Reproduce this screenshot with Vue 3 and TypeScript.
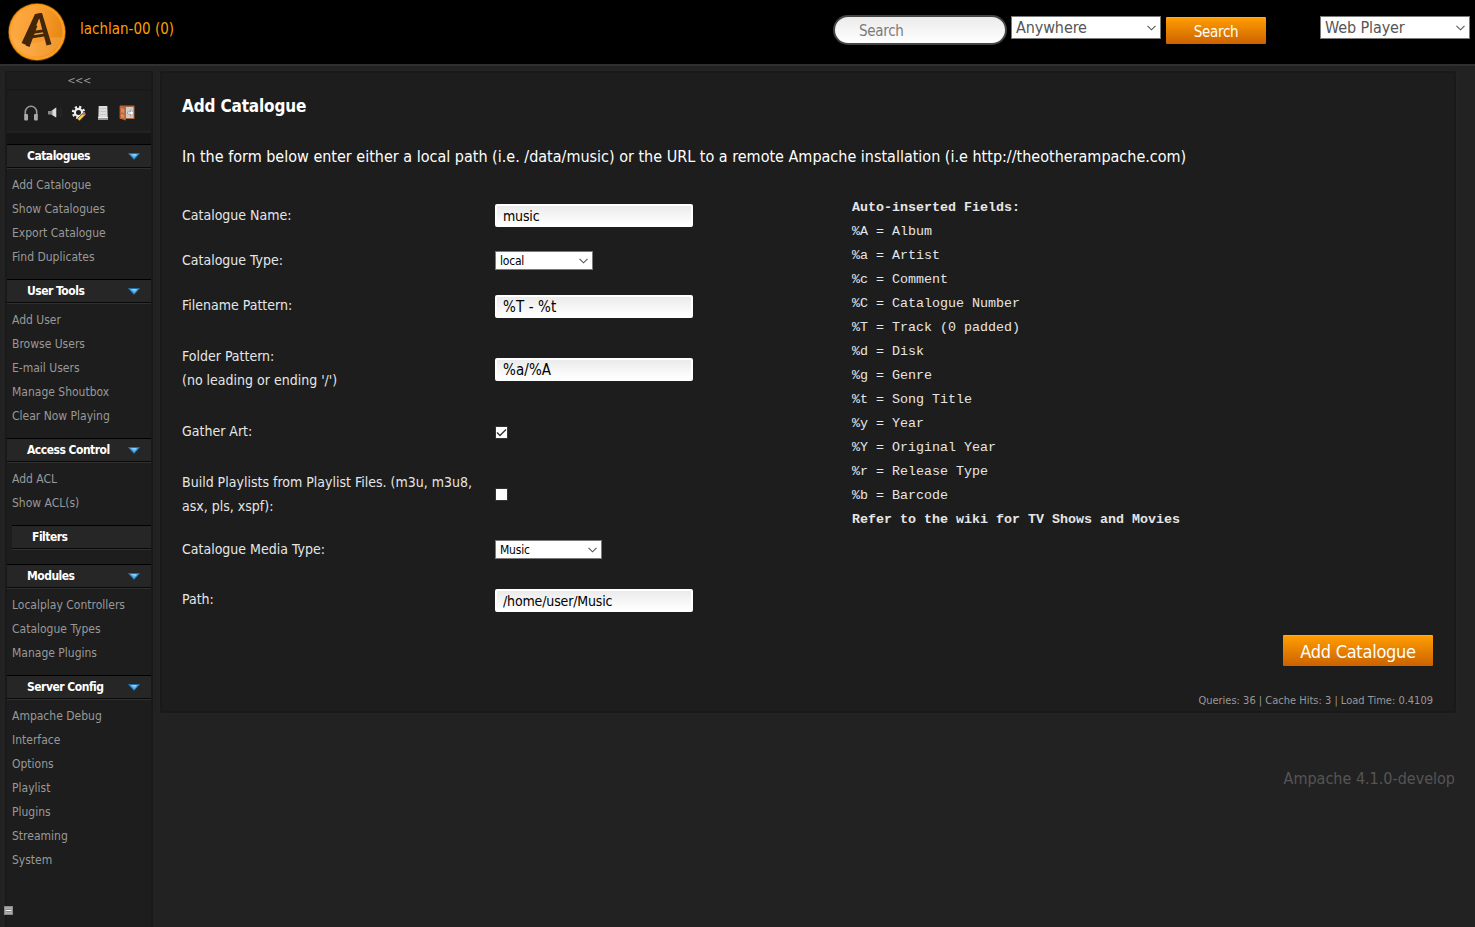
<script setup lang="ts">
import { ref } from 'vue'

interface Section { title: string; items: string[]; inset?: boolean }

const sections: Section[] = [
  { title: 'Catalogues', items: ['Add Catalogue', 'Show Catalogues', 'Export Catalogue', 'Find Duplicates'] },
  { title: 'User Tools', items: ['Add User', 'Browse Users', 'E-mail Users', 'Manage Shoutbox', 'Clear Now Playing'] },
  { title: 'Access Control', items: ['Add ACL', 'Show ACL(s)'] },
  { title: 'Filters', items: [], inset: true },
  { title: 'Modules', items: ['Localplay Controllers', 'Catalogue Types', 'Manage Plugins'] },
  { title: 'Server Config', items: ['Ampache Debug', 'Interface', 'Options', 'Playlist', 'Plugins', 'Streaming', 'System'] },
]

const fields: string[] = [
  '%A = Album', '%a = Artist', '%c = Comment', '%C = Catalogue Number', '%T = Track (0 padded)',
  '%d = Disk', '%g = Genre', '%t = Song Title', '%y = Year', '%Y = Original Year',
  '%r = Release Type', '%b = Barcode',
]

const name = ref('music')
const filePattern = ref('%T - %t')
const folderPattern = ref('%a/%A')
const path = ref('/home/user/Music')
const gatherArt = ref(true)
const buildPlaylists = ref(false)
</script>

<template>
  <div class="page">
    <header class="header">
      <svg class="logo" width="60" height="60" viewBox="0 0 60 60">
        <defs>
          <linearGradient id="disc" x1="0" y1="0" x2="1" y2="0.2">
            <stop offset="0" stop-color="#fdaa45" /><stop offset="0.5" stop-color="#f9a035" /><stop offset="1" stop-color="#ea8a16" />
          </linearGradient>
        </defs>
        <circle cx="30" cy="30" r="29" fill="#5c3a10" />
        <circle cx="30" cy="30" r="28.2" fill="#ff9a12" />
        <circle cx="30" cy="30" r="26.6" fill="#fda63a" />
        <circle cx="30" cy="30" r="25.8" fill="url(#disc)" />
        <path d="M4.4 33C15 42 24 44 35 39S50 36 55.2 35A26 26 0 0 1 4.4 33Z" fill="#ffbd68" opacity=".3" />
        <g fill="#42260a">
          <path d="M28 12L34.5 11L35.2 16L31.8 17L21.5 44L14.6 41Z" />
          <path d="M31 11.4L35 11L44.5 42.2L39.5 43.4Z" />
          <path d="M28 23L30.4 24L22.5 45L18.6 43.4Z" />
          <path d="M22 29.5L37.5 27.2L38 30L21 32.6Z" />
          <path d="M20 34.2L39.5 31.2L40 34L21 37Z" />
        </g>
      </svg>
      <a class="user">lachlan-00 (0)</a>
      <div class="search">
        <input class="query" type="text" placeholder="Search">
        <div class="select big">
          <select><option>Anywhere</option></select>
          <svg width="9" height="6" viewBox="0 0 9 6"><path d="M.5 .8L4.5 4.8L8.5 .8" /></svg>
        </div>
        <button class="orange find">Search</button>
      </div>
      <div class="select big player">
        <select><option>Web Player</option></select>
        <svg width="9" height="6" viewBox="0 0 9 6"><path d="M.5 .8L4.5 4.8L8.5 .8" /></svg>
      </div>
    </header>

    <div class="body">
      <aside class="sidebar">
        <div class="collapse">&lt;&lt;&lt;</div>
        <div class="tools">
          <svg width="16" height="16" viewBox="0 0 16 16">
            <path d="M2.3 11V7a5.7 5.7 0 0 1 11.4 0v4" fill="none" stroke="#999" stroke-width="1.6" />
            <rect x="1.2" y="9" width="3.8" height="6.5" rx="1" fill="#aaa" /><rect x="11" y="9" width="3.8" height="6.5" rx="1" fill="#aaa" />
          </svg>
          <svg width="16" height="16" viewBox="0 0 16 16">
            <path d="M1 6H4L9 2.5V12.5L4 9.5H1Z" fill="#888" /><path d="M5.5 5.2L9.3 2.5V12.5L5.5 10Z" fill="#ddd" />
            <path d="M11.5 4.5Q13 7.5 11.5 10.5M13.5 3Q15.5 7.5 13.5 12" fill="none" stroke="#2c2c2c" />
          </svg>
          <svg width="16" height="16" viewBox="0 0 16 16">
            <circle cx="7.5" cy="7.5" r="5.4" fill="none" stroke="#eee" stroke-width="2.6" stroke-dasharray="2.1 2.14" />
            <circle cx="7.5" cy="7.5" r="3.6" fill="none" stroke="#eee" stroke-width="2.2" />
            <path d="M7.3 15L13.5 8.8" stroke="#55420b" stroke-width="3.6" /><path d="M7.5 14.7L12.8 9.5" stroke="#f2d64b" stroke-width="2.4" />
            <path d="M12.4 10L14 8.4" stroke="#e36b64" stroke-width="2.6" />
          </svg>
          <svg width="16" height="16" viewBox="0 0 16 16">
            <path d="M3.5 1H12.5L13 12V15H3V12Z" fill="#999" /><path d="M4 1H12V12H4Z" fill="#ddd" />
            <path d="M4.5 3.5H11.5M4.5 6.5H11.5M4.5 9.5H11.5" stroke="#c8c8c8" /><path d="M3 12.5H13" stroke="#eee" /><path d="M10 14H12" stroke="#5fba45" />
          </svg>
          <svg width="16" height="16" viewBox="0 0 16 16">
            <path d="M1 .5H15.5V14H1Z" fill="#a9683a" /><path d="M7 2H14.5V13H7Z" fill="#ccc" />
            <path d="M.6 1L6.8 2.5V15.5L.6 13.5Z" fill="#b9663c" /><path d="M2 3L5.3 3.8V8L2 7.5ZM2 9L5.3 9.5V13.3L2 12.4Z" fill="#d98a56" />
            <path d="M8.5 7H11.5V5L15 8L11.5 11V9H8.5Z" fill="#fff" stroke="#888" stroke-width=".6" />
          </svg>
        </div>
        <div class="gap" />
        <nav v-for="s in sections" :key="s.title" class="section" :class="{ inset: s.inset }">
          <h4>
            <span>{{ s.title }}</span>
            <svg v-if="!s.inset" width="12" height="7" viewBox="0 0 12 7">
              <path d="M0 .3H12L6 6.8Z" fill="#2589cf" /><path d="M2.2 1.2H9.8L6.2 5Z" fill="#62b6ec" /><path d="M2.5 1.2H9L7 2.8Z" fill="#a6dafb" />
            </svg>
          </h4>
          <ul><li v-for="i in s.items" :key="i">{{ i }}</li></ul>
        </nav>
        <svg class="toggle" width="9" height="9" viewBox="0 0 9 9">
          <rect width="9" height="9" fill="#888" /><rect x="1" y="1" width="7" height="7" fill="#aaa" /><path d="M2 4.5H7" stroke="#fff" /><path d="M2 5.5H7M2 3.5H7" stroke="#777" stroke-width=".7" />
        </svg>
      </aside>

      <div class="content">
        <main class="panel">
          <h3>Add Catalogue</h3>
          <p class="intro">In the form below enter either a local path (i.e. /data/music) or the URL to a remote Ampache installation (i.e http://theotherampache.com)</p>
          <div class="columns">
            <div class="form">
              <label>Catalogue Name:</label><input v-model="name" class="text first" type="text">
              <label>Catalogue Type:</label>
              <div class="select small type">
                <select><option>local</option></select>
                <svg width="9" height="6" viewBox="0 0 9 6"><path d="M.5 .8L4.5 4.8L8.5 .8" /></svg>
              </div>
              <label>Filename Pattern:</label><input v-model="filePattern" class="text pattern" type="text">
              <label>Folder Pattern:<br>(no leading or ending '/')</label><input v-model="folderPattern" class="text pattern" type="text">
              <label>Gather Art:</label>
              <span class="box" @click="gatherArt = !gatherArt"><svg v-if="gatherArt" width="11" height="11" viewBox="0 0 11 11"><path d="M1 5.5L4 8.5L10 2.5" /></svg></span>
              <label>Build Playlists from Playlist Files. (m3u, m3u8,<br>asx, pls, xspf):</label>
              <span class="box upper" @click="buildPlaylists = !buildPlaylists"><svg v-if="buildPlaylists" width="11" height="11" viewBox="0 0 11 11"><path d="M1 5.5L4 8.5L10 2.5" /></svg></span>
              <label>Catalogue Media Type:</label>
              <div class="select small media">
                <select><option>Music</option></select>
                <svg width="9" height="6" viewBox="0 0 9 6"><path d="M.5 .8L4.5 4.8L8.5 .8" /></svg>
              </div>
              <label>Path:</label><input v-model="path" class="text" type="text">
            </div>
            <div class="fields">
              <strong>Auto-inserted Fields:</strong>
              <span v-for="f in fields" :key="f">{{ f }}</span>
              <strong>Refer to the wiki for TV Shows and Movies</strong>
            </div>
          </div>
          <button class="orange submit">Add Catalogue</button>
          <div class="stats">Queries: 36 | Cache Hits: 3 | Load Time: 0.4109</div>
        </main>
        <footer>Ampache 4.1.0-develop</footer>
      </div>
    </div>
  </div>
</template>

<style>
body { background: #222; }
</style>

<style scoped>
* { box-sizing: border-box; }
.page, .page input, .page select, .page button { font-family: "DejaVu Sans Condensed", "DejaVu Sans", sans-serif; font-stretch: condensed; }
.page { width: 1475px; height: 927px; overflow: hidden; background: #222; color: #fff; display: flex; flex-direction: column; }
.header { height: 66px; flex: none; background: #000; border-bottom: 2px solid #303030; display: flex; align-items: flex-start; padding: 0 5px 0 7px; }
.logo { margin-top: 2px; flex: none; }
.user { color: #ff9d00; font-size: 15px; line-height: 20px; margin: 19px 0 0 13px; width: 753px; }
.search { display: flex; align-items: flex-start; width: 433px; margin-right: 54px; flex: none; }
.query { width: 174px; height: 30px; margin: 15px 4px 0 0; border: 2px solid #444; border-radius: 15px; padding: 1px 24px 0; background: linear-gradient(#ebebeb, #fff); font-size: 15px; letter-spacing: -.3px; color: #555; flex: none; }
.query::placeholder { color: #7b7b7b; opacity: 1; }
.select { position: relative; background: #fff; border: 1px solid #7a7a7a; display: flex; align-items: center; flex: none; }
.select select { appearance: none; border: 0; outline: 0; background: none; margin: 0; padding: 0 4px; width: 100%; height: 100%; }
.select svg { position: absolute; right: 4px; top: 50%; margin-top: -3px; }
.select path { fill: none; stroke: #555; stroke-width: 1.1; }
.big { width: 150px; height: 23px; margin-top: 16px; }
.big select { font-size: 16px; letter-spacing: -.1px; color: #555; }
.small { height: 19px; }
.small select { font-size: 12px; letter-spacing: -.2px; padding-top: 2px; color: #000; }
.type { width: 98px; }
.media { width: 107px; }
.small svg { margin-top: -2px; }
.orange { border: 0; border-top: 1px solid #ffac2a; border-radius: 1px; background: linear-gradient(#ff9d00, #cc6200); color: #fff; padding: 0; }
.find { width: 100px; height: 27px; margin: 17px 0 0 5px; font-size: 15px; letter-spacing: -.3px; padding-top: 2px; }
.body { display: flex; flex: 1; padding: 5px 19px 0 5px; gap: 7px; }
.sidebar { width: 148px; flex: none; border-left: 2px solid #191919; border-right: 2px solid #191919; background: #1d1d1d; display: flex; flex-direction: column; position: relative; }
.collapse { height: 20px; line-height: 17px; text-align: center; font-size: 11px; letter-spacing: -.4px; color: #999; border-bottom: 2px solid #191919; border-top: 1px solid #191919; }
.tools { height: 42px; display: flex; align-items: center; gap: 8px; padding: 3px 0 0 16px; border-bottom: 2px solid #222; }
.gap { height: 11px; background: #161616; }
.section h4 { height: 24px; margin: 0; padding: 0 11px 0 20px; display: flex; align-items: center; justify-content: space-between; background: #262626; border-top: 1px solid #000; border-bottom: 1px solid #090909; box-shadow: 0 1px #303030; font-size: 12px; letter-spacing: -.5px; }
.section ul { list-style: none; margin: 0; padding: 5px 0 10px 5px; }
.section.inset { padding-left: 5px; }
.section li { height: 24px; line-height: 24px; font-size: 12px; color: #999; }
.toggle { position: absolute; left: -3px; top: 835px; }
.content { flex: 1; display: flex; flex-direction: column; }
.panel { height: 642px; background: #1d1d1d; border: 2px solid #191919; border-radius: 3px; box-shadow: 0 0 2px #2a2a2a; display: flex; flex-direction: column; padding: 21px 21px 0 20px; }
h3 { margin: 0; font-size: 17px; line-height: 24px; letter-spacing: -.15px; }
.intro { margin: 27px 0 0; font-size: 16px; line-height: 24px; white-space: nowrap; }
.columns { display: flex; margin-top: 21px; }
.form { display: grid; grid-template-columns: 313px 357px; grid-template-rows: 50px 40px 50px 76px 50px 76px 34px 66px; align-items: center; }
label { font-size: 14px; line-height: 24px; color: #e6e6e6; white-space: nowrap; }
.text { width: 198px; height: 23px; border: 2px solid #fff; border-radius: 2px; background: linear-gradient(#ebebeb, #fff); padding: 0 6px; font-size: 14px; letter-spacing: -.15px; color: #000; margin-top: 3px; }
.text.first { margin-top: 1px; }
.text.pattern { font-size: 15px; letter-spacing: .1px; }
.box { width: 13px; height: 13px; background: #fff; border: 1px solid #333; margin-top: 2px; display: flex; }
.box.upper { margin-top: 1px; }
.box path { fill: none; stroke: #333; stroke-width: 1.4; }
.fields { display: flex; flex-direction: column; padding-top: 6px; font-family: "Liberation Mono", monospace; font-size: 13.33px; line-height: 24px; color: #e6e6e6; white-space: pre; }
.submit { width: 150px; height: 31px; align-self: flex-end; margin-top: 3px; font-size: 18px; letter-spacing: -.25px; flex: none; }
.stats { margin-top: 27px; text-align: right; font-size: 11px; line-height: 16px; color: #999; }
footer { margin-top: 54px; padding-right: 1px; text-align: right; font-size: 16px; line-height: 24px; color: #555; }
</style>
